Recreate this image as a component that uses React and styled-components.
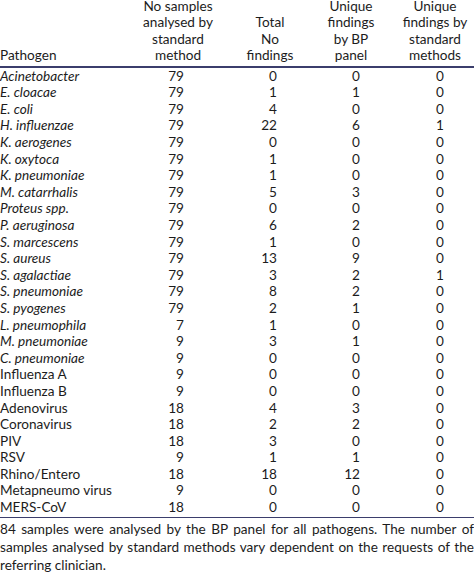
import styled, { createGlobalStyle } from 'styled-components';

const GlobalStyle = createGlobalStyle`
  html, body { margin: 0; padding: 0; background: #fff; }
  body {
    font-family: Lato, "Open Sans", sans-serif;
    color: #1c1c1c;
    -webkit-font-smoothing: antialiased;
  }
`;

const Wrap = styled.div`
  width: 474px;
  overflow: hidden;
`;

const Table = styled.table`
  width: 474px;
  border-collapse: collapse;
  table-layout: fixed;
  font-size: 13.6px;
  margin-top: -2px;
`;

const HeadRow = styled.tr`
  border-bottom: 2px solid #3b3e6c;
`;

const Th = styled.th`
  font-weight: 400;
  line-height: 16.4px;
  vertical-align: bottom;
  text-align: ${({ $left }) => ($left ? 'left' : 'center')};
  padding: 0 ${({ $pr }) => $pr || 0}px 2px ${({ $pl }) => $pl || 0}px;
  white-space: nowrap;
`;

const Td = styled.td`
  line-height: 16.6px;
  height: 16.6px;
  padding: 0 ${({ $pr }) => $pr || 0}px 0 0;
  text-align: ${({ $left }) => ($left ? 'left' : 'right')};
  font-style: ${({ $italic }) => ($italic ? 'italic' : 'normal')};
  white-space: nowrap;
`;

const BottomRule = styled.tr`
  border-bottom: 1.5px solid #3b3e6c;
  td { height: 1px; padding: 0; }
`;

const Note = styled.div`
  font-size: 13.6px;
  line-height: 18px;
  margin-top: 2px;
`;

const NoteLine = styled.span`
  display: block;
  white-space: nowrap;
  text-align: ${({ $last }) => ($last ? 'left' : 'justify')};
  text-align-last: ${({ $last }) => ($last ? 'left' : 'justify')};
`;

const cols = [
  { w: 140, th: { $left: true }, td: { $left: true } },
  { w: 76, th: {}, td: { $pr: 32 } },
  { w: 110, th: { $pr: 2 }, td: { $pr: 49 } },
  { w: 64, th: { $pr: 14 }, td: { $pr: 30 } },
  { w: 84, th: { $pl: 6 }, td: { $pr: 30 } },
];

const headers = [
  ['Pathogen'],
  ['No samples', 'analysed by', 'standard', 'method'],
  ['Total', 'No', 'findings'],
  ['Unique', 'findings', 'by BP', 'panel'],
  ['Unique', 'findings by', 'standard', 'methods'],
];

const rows = [
  ['Acinetobacter', 79, 0, 0, 0, true],
  ['E. cloacae', 79, 1, 1, 0, true],
  ['E. coli', 79, 4, 0, 0, true],
  ['H. influenzae', 79, 22, 6, 1, true],
  ['K. aerogenes', 79, 0, 0, 0, true],
  ['K. oxytoca', 79, 1, 0, 0, true],
  ['K. pneumoniae', 79, 1, 0, 0, true],
  ['M. catarrhalis', 79, 5, 3, 0, true],
  ['Proteus spp.', 79, 0, 0, 0, true],
  ['P. aeruginosa', 79, 6, 2, 0, true],
  ['S. marcescens', 79, 1, 0, 0, true],
  ['S. aureus', 79, 13, 9, 0, true],
  ['S. agalactiae', 79, 3, 2, 1, true],
  ['S. pneumoniae', 79, 8, 2, 0, true],
  ['S. pyogenes', 79, 2, 1, 0, true],
  ['L. pneumophila', 7, 1, 0, 0, true],
  ['M. pneumoniae', 9, 3, 1, 0, true],
  ['C. pneumoniae', 9, 0, 0, 0, true],
  ['Influenza A', 9, 0, 0, 0],
  ['Influenza B', 9, 0, 0, 0],
  ['Adenovirus', 18, 4, 3, 0],
  ['Coronavirus', 18, 2, 2, 0],
  ['PIV', 18, 3, 0, 0],
  ['RSV', 9, 1, 1, 0],
  ['Rhino/Entero', 18, 18, 12, 0],
  ['Metapneumo virus', 9, 0, 0, 0],
  ['MERS-CoV', 18, 0, 0, 0],
];

export default function App() {
  return (
    <Wrap>
      <GlobalStyle />
      <Table>
        <colgroup>
          {cols.map((c, i) => <col key={i} style={{ width: c.w }} />)}
        </colgroup>
        <thead>
          <HeadRow>
            {headers.map((lines, i) => (
              <Th key={i} {...cols[i].th}>
                {lines.map((l, j) => (
                  <span key={j}>{l}{j < lines.length - 1 && <br />}</span>
                ))}
              </Th>
            ))}
          </HeadRow>
        </thead>
        <tbody>
          {rows.map(([name, a, b, c, d, italic]) => (
            <tr key={name}>
              <Td $left $italic={italic}>{name}</Td>
              <Td {...cols[1].td}>{a}</Td>
              <Td {...cols[2].td}>{b}</Td>
              <Td {...cols[3].td}>{c}</Td>
              <Td {...cols[4].td}>{d}</Td>
            </tr>
          ))}
          <BottomRule><td colSpan={5} /></BottomRule>
        </tbody>
      </Table>
      <Note>
        <NoteLine>84 samples were analysed by the BP panel for all pathogens. The number of</NoteLine>
        <NoteLine>samples analysed by standard methods vary dependent on the requests of the</NoteLine>
        <NoteLine $last>referring clinician.</NoteLine>
      </Note>
    </Wrap>
  );
}
